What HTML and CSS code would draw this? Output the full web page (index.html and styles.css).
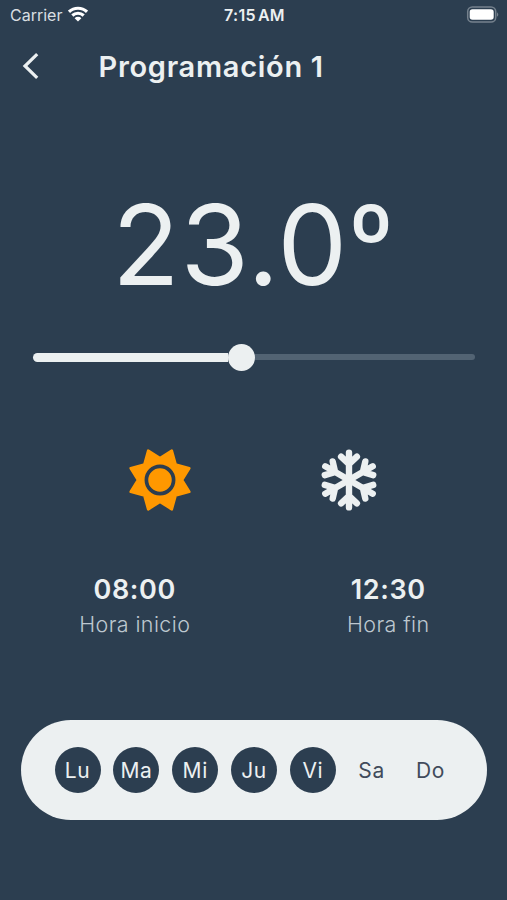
FILE: index.html
```html
<!DOCTYPE html>
<html lang="es">
<head>
<meta charset="utf-8">
<title>Programación 1</title>
<link rel="stylesheet" href="styles.css">
</head>
<body>
<div class="screen">
  <div class="status">
    <div class="carrier"><span>Carrier</span>
      <svg class="wifi" width="20" height="16" viewBox="0 0 20 16" fill="none" stroke="currentColor" stroke-width="3.1">
        <path d="M1 5.8a13 13 0 0 1 18 0M4.3 9.5a8.4 8.4 0 0 1 11.4 0"/>
        <path d="M10 15.6 6.6 12.2a4.8 4.8 0 0 1 6.8 0z" fill="currentColor" stroke="none"/>
      </svg>
    </div>
    <div class="clock">7:15<span class="meridiem">AM</span></div>
    <svg class="battery" width="34" height="18" viewBox="0 0 34 18">
      <rect x="1.7" y="1" width="28" height="15" rx="4.6" fill="none" stroke="#75818d" stroke-width="1.5"/>
      <rect x="3.7" y="3.2" width="24" height="10.6" rx="2.8" fill="#fff"/>
      <path d="M31 6.2q2.6 2.3 0 4.6z" fill="#75818d"/>
    </svg>
  </div>
  <header class="nav">
    <svg class="back" width="20" height="30" viewBox="0 0 20 30" fill="none" stroke="currentColor" stroke-width="3.2"><path d="M17.2 3.2 5 15l12.2 11.8"/></svg>
    <h1 class="title">Programación 1</h1>
  </header>
  <div class="temperature">23.0<span class="degree">º</span></div>
  <div class="slider"><div class="filled"></div><div class="thumb"></div><div class="rest"></div></div>
  <div class="modes">
    <svg width="68" height="68" viewBox="-34 -34 68 68">
      <path d="M-11.8-29.3 0-22 11.8-29.3 15.6-15.6 29.3-11.8 22 0 29.3 11.8 15.6 15.6 11.8 29.3 0 22-11.8 29.3-15.6 15.6-29.3 11.8-22 0-29.3-11.8-15.6-15.6z" fill="#ff9800" stroke="#ff9800" stroke-width="2.6" stroke-linejoin="round"/>
      <circle r="13.6" fill="none" stroke="#2c3e50" stroke-width="3.7"/>
    </svg>
    <svg width="68" height="68" viewBox="-34 -34 68 68" fill="none" stroke="#ecf0f1" stroke-width="6.4" stroke-linecap="round">
      <defs><path id="arm" d="M0 0V-27.4M-7.9-23.4 0-16 7.9-23.4"/></defs>
      <use href="#arm"/><use href="#arm" transform="rotate(60)"/><use href="#arm" transform="rotate(120)"/><use href="#arm" transform="rotate(180)"/><use href="#arm" transform="rotate(240)"/><use href="#arm" transform="rotate(300)"/>
    </svg>
  </div>
  <div class="times">
    <div class="time"><div class="hour">08:00</div><div class="label">Hora inicio</div></div>
    <div class="time"><div class="hour">12:30</div><div class="label">Hora fin</div></div>
  </div>
  <div class="days">
    <span class="day on">Lu</span><span class="day on">Ma</span><span class="day on">Mi</span><span class="day on">Ju</span><span class="day on">Vi</span><span class="day">Sa</span><span class="day">Do</span>
  </div>
</div>
</body>
</html>
```
FILE: styles.css
```css
* { box-sizing: border-box; }
body { margin: 0; background: #2c3e50; }
.screen {
  width: 507px;
  height: 900px;
  overflow: hidden;
  background: #2c3e50;
  color: #ecf0f1;
  font-family: Inter, "Liberation Sans", sans-serif;
}
.status {
  display: grid;
  grid-template-columns: 1fr auto 1fr;
  align-items: center;
  height: 30px;
  padding: 0 7px 0 10px;
}
.carrier { display: flex; align-items: center; gap: 6px; font-size: 16px; color: #d9dee2; }
.wifi { color: #fff; margin-top: -2px; }
.clock { font-size: 16px; font-weight: 600; letter-spacing: 0.3px; margin-left: -1px; }
.meridiem { margin-left: 2px; }
.battery { justify-self: end; margin-top: -1px; }
.nav { display: flex; align-items: center; height: 72px; padding-left: 20px; }
.back { display: block; }
.title { margin: 1px 0 0 58.5px; font-size: 29px; line-height: 36px; font-weight: 600; letter-spacing: 0.7px; }
.temperature {
  height: 141px;
  margin-top: 73px;
  padding-left: 112px;
  font-size: 111px;
  line-height: 140px;
  letter-spacing: 0.8px;
  white-space: nowrap;
}
.degree { font-size: 101px; line-height: 1; vertical-align: 8px; }
.slider { display: flex; align-items: center; height: 28px; margin: 27px 32px 0 33px; }
.filled { width: 195px; height: 9px; border-radius: 5px 0 0 5px; background: #ecf0f1; }
.thumb { width: 27px; height: 27px; border-radius: 50%; background: #ecf0f1; }
.rest { flex: 1; height: 6px; border-radius: 0 3px 3px 0; background: #526373; }
.modes { display: flex; gap: 121px; height: 68px; margin: 74.5px 0 0 125.5px; }
.times { display: flex; margin-top: 60px; }
.time { width: 253.5px; padding-left: 16px; text-align: center; }
.hour { font-size: 27px; line-height: 32px; font-weight: 600; letter-spacing: 0.6px; }
.label { margin-top: 3px; font-size: 21.5px; line-height: 30px; font-weight: 300; letter-spacing: 0.4px; color: #bdc7cf; }
.days {
  display: flex;
  justify-content: center;
  align-items: center;
  gap: 12.8px;
  width: 466px;
  height: 100px;
  margin: 81.5px 0 0 21px;
  border-radius: 50px;
  background: #ecf0f1;
}
.day { width: 46px; height: 46px; line-height: 48px; border-radius: 50%; font-size: 21px; letter-spacing: 0.6px; text-align: center; color: #414b5b; }
.on { background: #2c3e50; color: #ecf0f1; }
```
